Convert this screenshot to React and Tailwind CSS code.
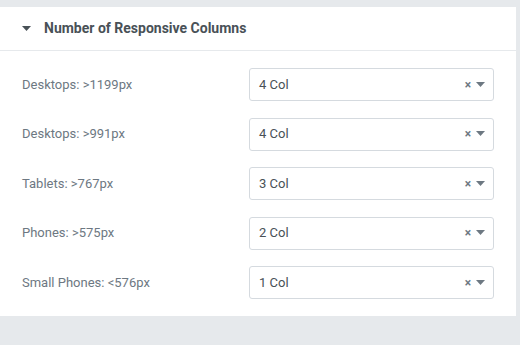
export default function App() {
  const rows = [
    ["Desktops: >1199px", "4 Col"],
    ["Desktops: >991px", "4 Col"],
    ["Tablets: >767px", "3 Col"],
    ["Phones: >575px", "2 Col"],
    ["Small Phones: <576px", "1 Col"],
  ];
  return (
    <div className="w-[520px] h-[345px] bg-[#e6e9ec] pt-[7px]" style={{ fontFamily: "Roboto, 'Liberation Sans', sans-serif" }}>
      <div className="w-[516px] bg-white">
        <div className="h-[44px] border-b border-[#e6e9ec] flex items-center pl-[22px]">
          <svg width="9" height="6" viewBox="0 0 9 6" className="mr-[13px] mt-[1px]">
            <path d="M0 0 L9 0 L4.5 5 Z" fill="#495157" />
          </svg>
          <span className="text-[14px] font-bold text-[#495157]">Number of Responsive Columns</span>
        </div>
        <div className="flex flex-col gap-[16.5px] pt-[17px] pb-[17px] pl-[22px] pr-[22px]">
          {rows.map(([label, val]) => (
            <div key={label} className="flex items-center h-[33px]">
              <div className="w-[227px] text-[13px] text-[#6d7882]">{label}</div>
              <div className="w-[245px] h-[33px] border border-[#d5dadf] rounded-[3px] flex items-center pl-[9px] pr-[8px]">
                <span className="flex-1 text-[13px] text-[#495157]">{val}</span>
                <span className="text-[12px] font-bold text-[#6d7882] mr-[5px] leading-none">×</span>
                <svg width="9" height="6" viewBox="0 0 9 6">
                  <path d="M0 0 L9 0 L4.5 5 Z" fill="#6d7882" />
                </svg>
              </div>
            </div>
          ))}
        </div>
      </div>
    </div>
  );
}
